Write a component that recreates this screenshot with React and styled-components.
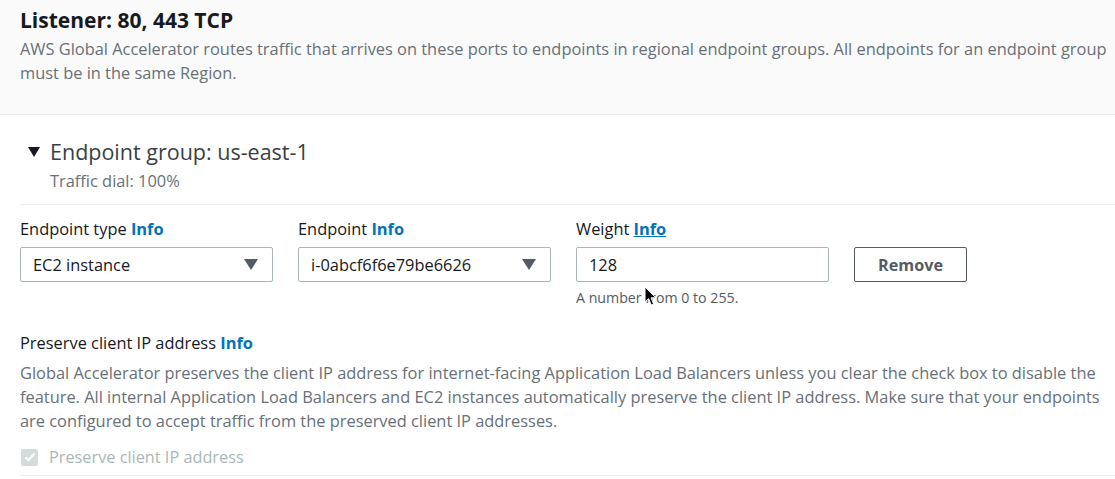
import React from 'react';
import styled, { createGlobalStyle } from 'styled-components';

const Global = createGlobalStyle`
	body {
		margin: 0;
		background: #fff;
		font-family: 'Open Sans', 'Noto Sans', sans-serif;
		color: #16191f;
	}
`;

const Page = styled.div`
	position: relative;
	width: 1115px;
	height: 479px;
	overflow: hidden;
`;

const Header = styled.div`
	background: #fafafa;
	border-bottom: 1px solid #eaeded;
	padding: 7px 6px 29px 20px;
	height: 78px;
`;

const Title = styled.h2`
	margin: 0;
	font-size: 21px;
	line-height: 26px;
	font-weight: 700;
	color: #16191f;
`;

const Desc = styled.p`
	margin: ${(p) => p.top || 0}px 0 0;
	font-size: 16.4px;
	line-height: 24px;
	color: #687078;
`;

const Body = styled.div`
	padding-left: 20px;
`;

const GroupHead = styled.div`
	display: flex;
	align-items: center;
	gap: 10px;
	margin-top: 22px;
	padding-left: 8px;
`;

const Caret = styled.span`
	width: 0;
	height: 0;
	border-left: 6px solid transparent;
	border-right: 6px solid transparent;
	border-top: 10px solid #16191f;
`;

const GroupTitle = styled.h3`
	margin: 0;
	font-size: 21.5px;
	line-height: 30px;
	font-weight: 400;
	color: #3a3f44;
`;

const Sub = styled.div`
	margin: 3px 0 0 30px;
	font-size: 16.4px;
	line-height: 22px;
	color: #687078;
`;

const Divider = styled.hr`
	margin: ${(p) => p.top}px 0 0;
	border: 0;
	border-top: 1px solid #eaeded;
	height: 0;
`;

const Fields = styled.div`
	display: grid;
	grid-template-columns: 253px 253px 253px 113px;
	column-gap: 25px;
	margin-top: 13px;
`;

const Field = styled.div`
	display: flex;
	flex-direction: column;
`;

const Label = styled.label`
	display: block;
	font-size: 16.4px;
	line-height: 22px;
	color: #16191f;
	margin: ${(p) => p.top || 0}px 0 0;
`;

const Info = styled.a`
	color: #0073bb;
	font-weight: 700;
	text-decoration: ${(p) => (p.underline ? 'underline' : 'none')};
`;

const Control = styled.div`
	margin-top: 7px;
	box-sizing: border-box;
	height: 35px;
	border: 1px solid #aab7b8;
	border-radius: 2px;
	display: flex;
	align-items: center;
	justify-content: space-between;
	padding: 0 14px 0 12px;
	font-size: 16.4px;
	color: #16191f;
	background: #fff;
`;

const Arrow = styled.span`
	width: 0;
	height: 0;
	border-left: 7px solid transparent;
	border-right: 7px solid transparent;
	border-top: 11px solid #545b64;
`;

const Hint = styled.div`
	margin-top: 6px;
	font-size: 14.2px;
	line-height: 20px;
	color: #545b64;
`;

const Button = styled.button`
	margin-top: 29px;
	box-sizing: border-box;
	height: 35px;
	width: 113px;
	border: 1px solid #545b64;
	border-radius: 2px;
	background: #fff;
	font-family: inherit;
	font-size: 16.2px;
	font-weight: 700;
	color: #545b64;
`;

const CheckRow = styled.div`
	display: flex;
	align-items: center;
	gap: 11px;
	margin-top: 13px;
	height: 22px;
	font-size: 16.3px;
	color: #aab7b8;
`;

const Box = styled.span`
	width: 17px;
	height: 17px;
	margin-left: 1px;
	border-radius: 2px;
	background: #d5dbdb;
	display: flex;
	align-items: center;
	justify-content: center;
`;

const Cursor = styled.svg`
	position: absolute;
	left: 644px;
	top: 286px;
`;

const Text = styled.div`
	padding-right: 6px;
`;

export default function App() {
	return (
		<Page>
			<Global />
			<Header>
				<Title>Listener: 80, 443 TCP</Title>
				<Desc top={4}>
					AWS Global Accelerator routes traffic that arrives on these ports to endpoints in regional endpoint groups. All endpoints for an endpoint group must be in the same Region.
				</Desc>
			</Header>
			<Body>
				<GroupHead>
					<Caret />
					<GroupTitle>Endpoint group: us-east-1</GroupTitle>
				</GroupHead>
				<Sub>Traffic dial: 100%</Sub>
				<Divider top={12} />
				<Fields>
					<Field>
						<Label>Endpoint type <Info>Info</Info></Label>
						<Control>EC2 instance<Arrow /></Control>
					</Field>
					<Field>
						<Label>Endpoint <Info>Info</Info></Label>
						<Control>i-0abcf6f6e79be6626<Arrow /></Control>
					</Field>
					<Field>
						<Label>Weight <Info underline>Info</Info></Label>
						<Control>128</Control>
						<Hint>A number from 0 to 255.</Hint>
					</Field>
					<Field>
						<Button>Remove</Button>
					</Field>
				</Fields>
				<Text>
					<Label top={24}>Preserve client IP address <Info>Info</Info></Label>
					<Desc top={7}>
						Global Accelerator preserves the client IP address for internet-facing Application Load Balancers unless you clear the check box to disable the feature. All internal Application Load Balancers and EC2 instances automatically preserve the client IP address. Make sure that your endpoints are configured to accept traffic from the preserved client IP addresses.
					</Desc>
				</Text>
				<CheckRow>
					<Box>
						<svg width="12" height="10" viewBox="0 0 12 10">
							<path d="M1.5 5.2 L4.5 8 L10.5 1.5" fill="none" stroke="#fff" strokeWidth="2.2" />
						</svg>
					</Box>
					Preserve client IP address
				</CheckRow>
				<Divider top={7} />
			</Body>
			<Cursor width="14" height="21" viewBox="0 0 14 21">
				<path d="M1 1 L1 16 L4.6 12.6 L7.2 19 L9.6 18 L7 11.8 L12 11.8 Z" fill="#000" stroke="#fff" strokeWidth="1" />
			</Cursor>
		</Page>
	);
}
